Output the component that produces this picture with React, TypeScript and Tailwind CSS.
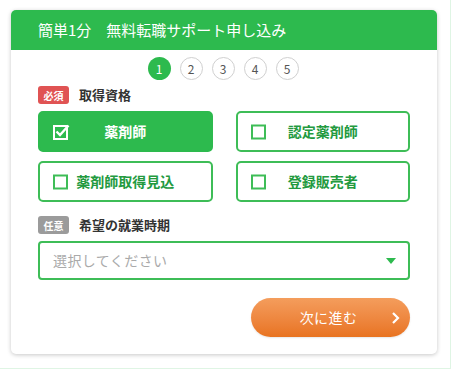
import React from "react";

const Box = ({ checked }: { checked: boolean }) =>
  checked ? (
    <svg width="17" height="16" viewBox="0 0 17 16" className="shrink-0">
      <rect x="1" y="2" width="13" height="13" fill="none" stroke="#fff" strokeWidth="2" />
      <path d="M3.5 7.5 L7 11 L15.5 1.5" fill="none" stroke="#fff" strokeWidth="2.4" />
    </svg>
  ) : (
    <span className="block w-[15px] h-[15px] border-2 border-[#3ebd57] shrink-0" />
  );

const Opt = ({ label, checked }: { label: string; checked?: boolean }) => (
  <div
    className={
      "relative h-[41px] rounded-[5px] border-2 flex items-center justify-center " +
      (checked ? "bg-[#2dba4e] border-[#2dba4e] text-white" : "bg-white border-[#3ebd57] text-[#239a3f]")
    }
  >
    <span className="absolute left-[13px] top-1/2 -translate-y-1/2 flex">
      <Box checked={!!checked} />
    </span>
    <span className="text-[14px] font-bold">{label}</span>
  </div>
);

export default function App() {
  return (
    <div
      className="w-[451px] h-[369px] border-r border-b border-[#dff5e4] bg-white pt-[10px] pl-[11px]"
      style={{ fontFamily: '"Noto Sans CJK JP", "Noto Sans", sans-serif' }}
    >
      <div className="w-[426px] h-[344px] rounded-[5px] bg-white shadow-[0_1px_4px_rgba(0,0,0,0.22)] overflow-hidden">
        <div className="h-[40px] bg-[#2dba4e] text-white text-[15px] flex items-center pl-[27px]">
          簡単1分　無料転職サポート申し込み
        </div>
        <div className="px-[27px]">
          <div className="flex justify-center gap-[9px] pt-[7px] pr-[2px]">
            {[1, 2, 3, 4, 5].map((n) => (
              <div
                key={n}
                className={
                  "w-[23px] h-[23px] rounded-full flex items-center justify-center text-[12px] " +
                  (n === 1 ? "bg-[#2dba4e] text-white" : "border border-[#d0d0d0] text-[#555] bg-white")
                }
              >
                {n}
              </div>
            ))}
          </div>
          <div className="flex items-center gap-[10px] mt-[5px] h-[20px]">
            <span className="w-[31px] h-[18px] rounded-[3px] bg-[#e05353] text-white text-[10px] font-bold flex items-center justify-center">
              必須
            </span>
            <span className="text-[13px] font-bold text-[#333]">取得資格</span>
          </div>
          <div className="grid grid-cols-2 gap-x-[23px] gap-y-[9px] mt-[6px]">
            <Opt label="薬剤師" checked />
            <Opt label="認定薬剤師" />
            <Opt label="薬剤師取得見込" />
            <Opt label="登録販売者" />
          </div>
          <div className="flex items-center gap-[10px] mt-[13px] h-[20px]">
            <span className="w-[31px] h-[18px] rounded-[3px] bg-[#9b9b9b] text-white text-[10px] font-bold flex items-center justify-center">
              任意
            </span>
            <span className="text-[13px] font-bold text-[#333]">希望の就業時期</span>
          </div>
          <div className="mt-[6px] h-[39px] rounded-[4px] border-2 border-[#3ebd57] flex items-center justify-between pl-[13px] pr-[12px]">
            <span className="text-[14px] text-[#aaa] tracking-[0.03em]">選択してください</span>
            <svg width="10" height="6" viewBox="0 0 10 6">
              <path d="M0 0 H10 L5 6 Z" fill="#2dba4e" />
            </svg>
          </div>
          <div className="flex justify-end mt-[18px]">
            <div className="relative w-[159px] h-[39px] rounded-full bg-gradient-to-b from-[#f49d5c] to-[#e8731f] text-white flex items-center justify-center shadow-[0_1px_2px_rgba(0,0,0,0.1)]">
              <span className="text-[14px] pr-[4px] tracking-[0.03em]">次に進む</span>
              <svg className="absolute right-[10px] top-1/2 -translate-y-1/2" width="9" height="13" viewBox="0 0 9 13">
                <path d="M2 1.5 L7 6.5 L2 11.5" fill="none" stroke="#fff" strokeWidth="2.2" />
              </svg>
            </div>
          </div>
        </div>
      </div>
    </div>
  );
}
